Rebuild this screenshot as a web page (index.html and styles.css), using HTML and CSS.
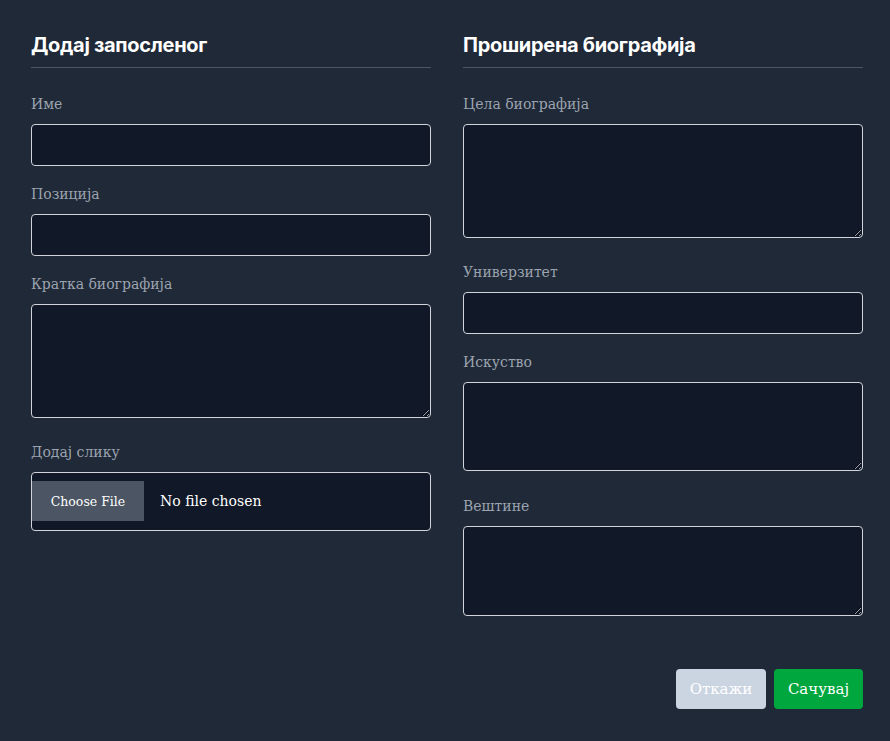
FILE: index.html
```html
<!DOCTYPE html>
<html lang="sr">
<head>
<meta charset="utf-8">
<title>Додај запосленог</title>
<link rel="stylesheet" href="styles.css">
</head>
<body>
<form class="modal">
  <div class="cols">
    <section class="col">
      <h2 class="title">Додај запосленог</h2>
      <div class="field">
        <label class="label">Име</label>
        <input class="input" type="text">
      </div>
      <div class="field">
        <label class="label">Позиција</label>
        <input class="input" type="text">
      </div>
      <div class="field field-area">
        <label class="label">Кратка биографија</label>
        <textarea class="area area-lg"></textarea>
      </div>
      <div class="field">
        <label class="label">Додај слику</label>
        <input class="file" type="file">
      </div>
    </section>
    <section class="col">
      <h2 class="title">Проширена биографија</h2>
      <div class="field field-area">
        <label class="label">Цела биографија</label>
        <textarea class="area area-lg"></textarea>
      </div>
      <div class="field">
        <label class="label">Универзитет</label>
        <input class="input" type="text">
      </div>
      <div class="field field-area field-area-wide">
        <label class="label">Искуство</label>
        <textarea class="area area-md"></textarea>
      </div>
      <div class="field field-area">
        <label class="label">Вештине</label>
        <textarea class="area area-md2"></textarea>
      </div>
    </section>
  </div>
  <div class="actions">
    <button type="button" class="btn btn-cancel">Откажи</button>
    <button type="button" class="btn btn-save">Сачувај</button>
  </div>
</form>
</body>
</html>
```
FILE: styles.css
```css
html, body {
  margin: 0;
  background: #1f2937;
}
body {
  font-family: "DejaVu Serif", serif;
  min-height: 741px;
}
.modal {
  padding: 31px 27px 31px 31px;
}
.cols {
  display: grid;
  grid-template-columns: 400px 400px;
  column-gap: 32px;
  align-items: start;
}
.title {
  margin: 0 0 24px 0;
  font-family: Inter, "Noto Sans", sans-serif;
  font-weight: 700;
  font-size: 20px;
  line-height: 28px;
  color: #ffffff;
  padding-bottom: 8px;
  border-bottom: 1px solid #4b5563;
  letter-spacing: -0.3px;
}
.field {
  display: flex;
  flex-direction: column;
  margin-bottom: 16px;
}
.field-area {
  margin-bottom: 22px;
}
.field-area-wide {
  margin-bottom: 23px;
}
.label {
  font-size: 14px;
  line-height: 24px;
  color: #9ca3af;
  margin-bottom: 8px;
}
.input, .area, .file {
  box-sizing: border-box;
  width: 400px;
  background: #111827;
  border: 1px solid #d1d5db;
  border-radius: 4px;
  color: #fff;
  font-family: inherit;
  font-size: 15px;
  margin: 0;
}
.input {
  height: 42px;
  padding: 0 12px;
}
.area {
  display: block;
  padding: 8px 12px;
}
.area-lg { height: 114px; }
.area-md { height: 89px; }
.area-md2 { height: 90px; }
.file {
  height: 59px;
  padding: 8px 0 9px 0;
  font-size: 14px;
  color: #ffffff;
}
.file::file-selector-button {
  height: 40px;
  width: 112px;
  margin: 0 16px 0 0;
  padding: 0;
  border: none;
  border-radius: 0;
  background: #4b5563;
  color: #ffffff;
  font-family: "DejaVu Serif", serif;
  font-size: 12.5px;
}
.actions {
  display: flex;
  justify-content: flex-end;
  gap: 8px;
  margin-top: 31px;
}
.btn {
  height: 40px;
  border: none;
  border-radius: 4px;
  font-family: "DejaVu Serif", serif;
  font-size: 15px;
  color: #ffffff;
  padding: 0 12px;
}
.btn-cancel {
  width: 90px;
  background: #cbd5e1;
}
.btn-save {
  width: 89px;
  background: #00a63e;
}
```
